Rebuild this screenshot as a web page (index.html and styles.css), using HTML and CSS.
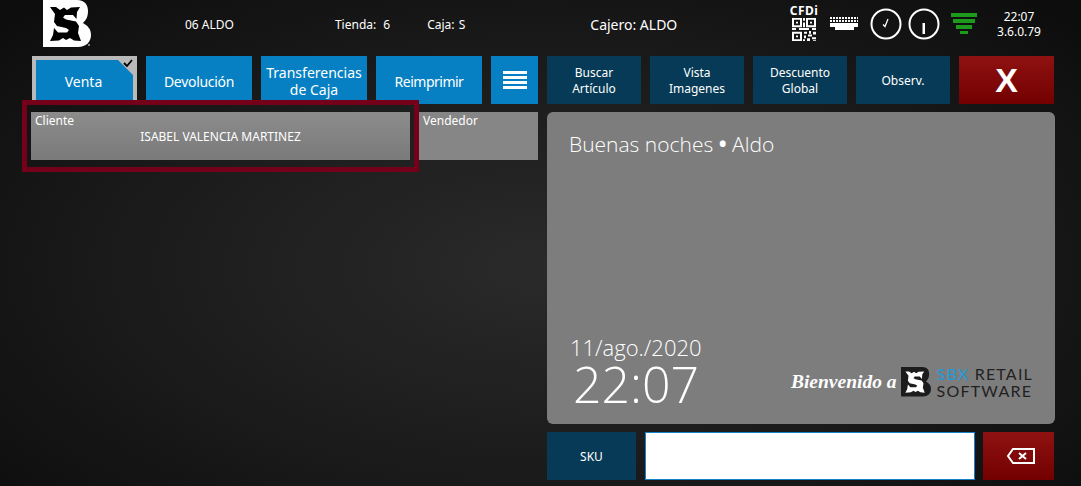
FILE: index.html
```html
<!DOCTYPE html>
<html lang="en">
<head>
    <meta charset="UTF-8">
    <meta name="viewport" content="width=device-width, initial-scale=1.0">
    <title>Punto de Venta</title>
    <link rel="stylesheet" href="styles.css">
</head>
<body>
    <div class="header">
        <svg class="logo" viewBox="0 0 48 48" width="48" height="48">
            <path fill="#fff" d="M0 0H34C42 0 45 5 45 11C45 17 43 20 40 23C45 26 48 29 48 35C48 42 43 47 35 47H0Z"/>
            <path fill="#000" d="M7 7L13 7L17 10L21 7.500L24 10L28 7.500L37 7L34 12L33.500 19L30 15L22 15L20 17.500L23 19.500L33 21.500L36 26L35 33L38 41L31 40.500L27 38L23 40L20 38L16 40.500L7 41L10 35L11 28L15 32.500L24 32.500L26 30L23 28L14 26L11 22L12 14Z"/>
            <circle cx="46" cy="45" r="1" fill="#aaa"/>
        </svg>
        <div class="info info-store">06 ALDO</div>
        <div class="info info-tienda">Tienda: 6</div>
        <div class="info info-caja">Caja: S</div>
        <div class="info info-cajero">Cajero: ALDO</div>
        <div class="status">
            <div class="cfdi">
                <span class="cfdi-label">CFDi</span>
                <svg viewBox="0 0 26 27" width="26" height="25" preserveAspectRatio="none">
                    <path fill="none" stroke="#fff" stroke-width="2" d="M2 2H10V10H2ZM16 2H24V10H16ZM2 17H10V25H2Z"/>
                    <path fill="#fff" d="M5 5H7V7H5ZM19 5H21V7H19ZM5 20H7V22H5ZM12 1H14V4H12ZM12 6H14V11H12ZM1 12H5V14H1ZM8 12H18V14H8ZM21 12H25V14H21ZM13 16H16V18H13ZM18 15H20V18H18ZM22 16H25V19H22ZM13 20H15V23H13ZM17 19H21V21H17ZM16 23H19V26H16ZM21 22H25V24H21ZM12 24H14V26H12ZM22 25H25V26H22Z"/>
                </svg>
            </div>
            <svg class="keyboard" viewBox="0 0 28 14" width="28" height="14">
                <path fill="none" stroke="#fff" stroke-width="2" stroke-dasharray="2 1" d="M0 1H28M0 4H28"/>
                <path fill="#fff" d="M0 6H28V10H0ZM5 10H24V13H5Z"/>
            </svg>
            <svg class="clock" viewBox="0 0 32 32" width="32" height="32">
                <circle cx="16" cy="16" r="14.500" fill="none" stroke="#fff" stroke-width="2"/>
                <path fill="none" stroke="#fff" stroke-width="1.300" d="M13 16.500L15 18.500L18 11"/>
            </svg>
            <svg class="clock" viewBox="0 0 32 32" width="32" height="32">
                <circle cx="16" cy="16" r="14.500" fill="none" stroke="#fff" stroke-width="2"/>
                <path fill="#fff" d="M14.500 15H17V26H14.500Z"/>
            </svg>
            <svg class="signal" viewBox="0 0 27 22" width="27" height="22">
                <path fill="#1c9a1c" d="M0 0H26V4H0ZM2 6H24V10H2ZM5 12H21V16H5ZM9 18H17V21H9Z"/>
            </svg>
            <div class="version">22:07<br>3.6.0.79</div>
        </div>
    </div>

    <div class="toolbar">
        <button class="btn btn-blue btn-active">Venta<span class="corner"></span>
            <svg class="check" viewBox="0 0 10 8" width="10" height="8"><path fill="none" stroke="#000" stroke-width="1.800" d="M1 4L4 7L9 1"/></svg>
        </button>
        <button class="btn btn-blue btn-snug">Devolución</button>
        <button class="btn btn-blue btn-two">Transferencias<br>de Caja</button>
        <button class="btn btn-blue btn-tight">Reimprimir</button>
        <button class="btn btn-blue btn-menu"><span class="bars"></span></button>
        <button class="btn btn-dark">Buscar<br>Artículo</button>
        <button class="btn btn-dark">Vista<br>Imagenes</button>
        <button class="btn btn-dark">Descuento<br>Global</button>
        <button class="btn btn-dark">Observ.</button>
        <button class="btn btn-red btn-close">X</button>
    </div>

    <div class="main-content">
        <div class="left-col">
            <div class="field field-cliente">
                <div class="field-label">Cliente</div>
                <div class="field-value">ISABEL VALENCIA MARTINEZ</div>
                <div class="highlight"></div>
            </div>
            <div class="field field-vendedor">
                <div class="field-label">Vendedor</div>
            </div>
        </div>
        <div class="right-col">
            <div class="panel">
                <div class="greeting">Buenas noches <span class="dot">•</span> Aldo</div>
                <div class="panel-bottom">
                    <div class="datetime">
                        <div class="date">11/ago./2020</div>
                        <div class="time">22:07</div>
                    </div>
                    <div class="brand">
                        <span class="welcome">Bienvenido a</span>
                        <svg class="brand-logo" viewBox="0 0 48 48" width="32" height="30">
                            <path fill="#1c1c1c" d="M0 0H34C42 0 45 5 45 11C45 17 43 20 40 23C45 26 48 29 48 35C48 42 43 47 35 47H0Z"/>
                            <path fill="#fff" d="M7 7L13 7L17 10L21 7.500L24 10L28 7.500L37 7L34 12L33.500 19L30 15L22 15L20 17.500L23 19.500L33 21.500L36 26L35 33L38 41L31 40.500L27 38L23 40L20 38L16 40.500L7 41L10 35L11 28L15 32.500L24 32.500L26 30L23 28L14 26L11 22L12 14Z"/>
                        </svg>
                        <div class="brand-name">
                            <div><span class="sbx">SBX</span> RETAIL</div>
                            <div>SOFTWARE</div>
                        </div>
                    </div>
                </div>
            </div>
            <div class="sku-row">
                <button class="btn btn-dark btn-sku">SKU</button>
                <input class="sku-input" type="text">
                <button class="btn btn-red btn-back">
                    <svg viewBox="0 0 30 18" width="30" height="18">
                        <path fill="none" stroke="#fff" stroke-width="2" d="M7 2H28V16H7L2 9Z"/>
                        <path fill="none" stroke="#fff" stroke-width="2" d="M13 6L20 12M20 6L13 12"/>
                    </svg>
                </button>
            </div>
        </div>
    </div>
</body>
</html>
```

FILE: styles.css
```css
body {
    font-family: 'Noto Sans', 'Open Sans', sans-serif;
    background-color: #141414;
    background-image: radial-gradient(ellipse at 50% 55%, #2a2a2a 0%, #1c1c1c 50%, #0c0c0c 100%);
    color: #fff;
    margin: 0;
    padding: 0;
    width: 1081px;
    height: 486px;
    overflow: hidden;
}

.header {
    display: flex;
    align-items: center;
    height: 56px;
    padding-left: 43px;
    font-size: 12px;
    box-sizing: border-box;
    padding-bottom: 8px;
}

.logo {
    flex: none;
    align-self: flex-start;
}

.info {
    white-space: nowrap;
}

.info-store {
    margin-left: 94px;
}

.info-tienda {
    margin-left: 101px;
    word-spacing: 4px;
}

.info-caja {
    margin-left: 37px;
    word-spacing: 1px;
}

.info-cajero {
    margin-left: 125px;
    font-size: 14px;
}

.status {
    display: flex;
    align-items: center;
    margin-left: auto;
    margin-right: 40px;
}

.cfdi {
    display: flex;
    flex-direction: column;
    align-items: center;
    width: 28px;
}

.cfdi-label {
    font-size: 12px;
    font-weight: bold;
    line-height: 9px;
    margin-bottom: 2px;
    letter-spacing: 0.5px;
}

.keyboard {
    margin-left: 12px;
}

.clock {
    margin-left: 6px;
}

.keyboard + .clock {
    margin-left: 12px;
}

.signal {
    margin-left: 11px;
}

.version {
    margin-left: 19px;
    width: 44px;
    text-align: center;
    font-size: 12px;
    line-height: 15px;
}

.toolbar {
    display: flex;
    gap: 9px;
    padding-left: 32px;
    height: 48px;
}

.btn {
    font-family: 'Noto Sans', 'Open Sans', sans-serif;
    border: none;
    padding: 2px 0 0;
    color: #fff;
    width: 106px;
    position: relative;
    cursor: pointer;
}

.btn-blue {
    background-color: #0680c2;
    font-size: 14px;
    line-height: 17px;
}

.btn-snug {
    letter-spacing: -0.300px;
}

.btn-tight {
    letter-spacing: -0.500px;
}

.btn-dark {
    background-color: #063a56;
    width: 94px;
    font-size: 12px;
    line-height: 16px;
}

.btn-red {
    background-image: linear-gradient(#8f1212, #730000);
}

.btn-active {
    width: 105px;
    border: 4px solid #b9b9b9;
    border-bottom: none;
    padding: 0 2px 2px 0;
}

.corner {
    position: absolute;
    top: -1px;
    right: -1px;
    border-style: solid;
    border-width: 0 17px 17px 0;
    border-color: transparent #b9b9b9 transparent transparent;
}

.check {
    position: absolute;
    top: -1px;
    right: 0;
}

.btn-menu {
    width: 47px;
    padding: 0;
}

.bars {
    display: block;
    width: 24px;
    height: 18px;
    margin: 0 auto;
    background-image: repeating-linear-gradient(#fff 0, #fff 3px, transparent 3px, transparent 5px);
}

.btn-close {
    width: 95px;
    font-size: 34px;
    font-weight: bold;
    font-family: 'Liberation Sans', sans-serif;
    padding: 0;
}

.main-content {
    display: flex;
    gap: 9px;
    padding: 8px 0 0 31px;
}

.left-col {
    display: flex;
    gap: 9px;
    width: 507px;
    height: 48px;
}

.field {
    position: relative;
    background-image: linear-gradient(#8c8c8c, #7a7a7a);
    font-size: 12px;
    box-sizing: border-box;
}

.field-cliente {
    width: 379px;
}

.field-vendedor {
    width: 119px;
    background-image: none;
    background-color: #868686;
}

.field-label {
    padding: 1px 0 0 4px;
    line-height: 15px;
}

.field-value {
    text-align: center;
    font-size: 12px;
    line-height: 18px;
}

.highlight {
    position: absolute;
    top: -12px;
    left: -9px;
    right: -9px;
    bottom: -12px;
    border: 5px solid #750019;
}

.right-col {
    width: 508px;
}

.panel {
    display: flex;
    flex-direction: column;
    justify-content: space-between;
    height: 312px;
    box-sizing: border-box;
    padding: 18px 22px 15px 22px;
    background-color: #7d7d7d;
    border-radius: 6px;
}

.greeting {
    font-family: 'Open Sans', sans-serif;
    font-weight: 300;
    font-size: 21px;
    line-height: 28px;
}

.dot {
    font-weight: 700;
}

.panel-bottom {
    display: flex;
    justify-content: space-between;
    align-items: flex-end;
}

.datetime {
    font-family: 'Open Sans', sans-serif;
    font-weight: 300;
    padding-left: 1px;
}

.date {
    font-size: 22px;
    line-height: 26px;
    margin-bottom: -1px;
}

.time {
    font-size: 50px;
    line-height: 50px;
    padding-left: 3px;
}

.brand {
    display: flex;
    align-items: center;
    margin-bottom: 10px;
}

.welcome {
    font-family: 'Liberation Serif', serif;
    font-weight: bold;
    font-style: italic;
    font-size: 19.500px;
    margin-right: 3px;
}

.brand-name {
    margin-left: 5px;
    font-family: 'Lato', sans-serif;
    font-size: 16px;
    line-height: 17px;
    letter-spacing: 1.200px;
    color: #222;
}

.sbx {
    color: #1f9ad9;
}

.sku-row {
    display: flex;
    margin-top: 8px;
    height: 48px;
}

.btn-sku {
    width: 89px;
    font-size: 12px;
}

.sku-input {
    width: 330px;
    height: 48px;
    margin: 0 8px 0 9px;
    box-sizing: border-box;
    border: 1px solid #1482c8;
    background-color: #fff;
    outline: none;
    padding: 0 5px;
}

.btn-back {
    width: 71px;
    padding: 0;
}

.btn-back svg {
    display: block;
    margin: 0 auto;
    position: relative;
    left: 2px;
}
```
